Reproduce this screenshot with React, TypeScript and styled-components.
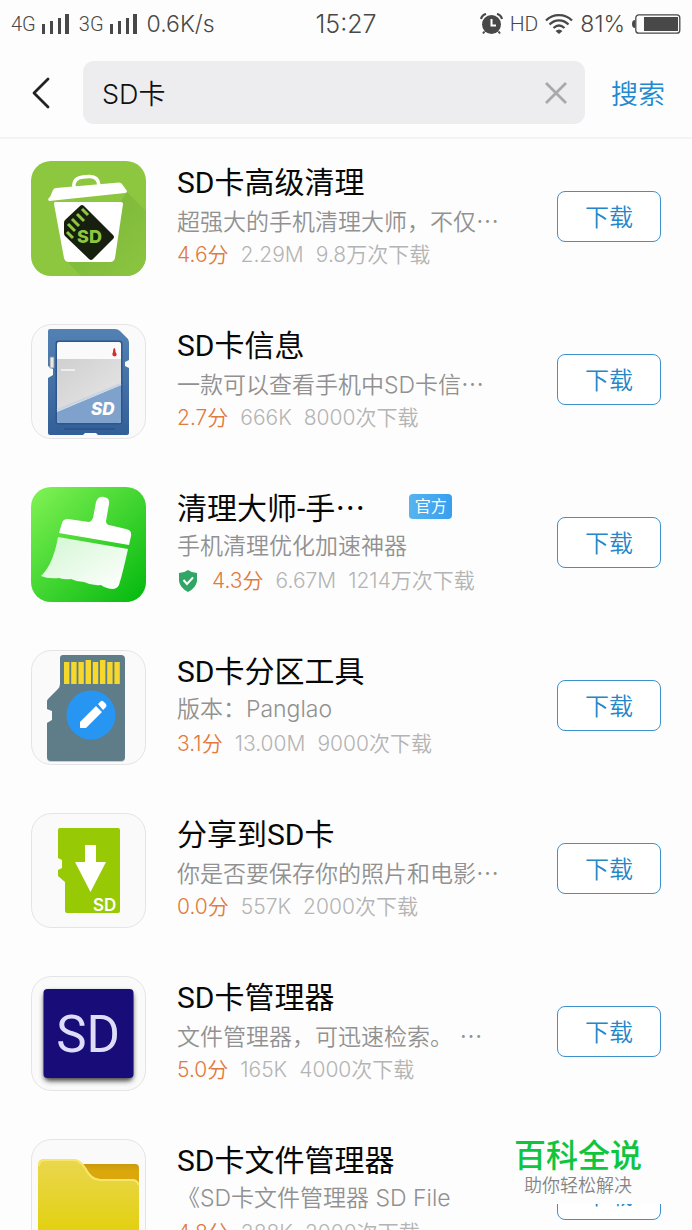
import React from "react";
import styled, { createGlobalStyle } from "styled-components";

const latin = `Inter, "Noto Sans CJK SC", sans-serif`;
const roboto = `Roboto, "Noto Sans CJK SC", sans-serif`;
const cjk = `"Noto Sans CJK SC", sans-serif`;

const GlobalStyle = createGlobalStyle`
  * { box-sizing: border-box; }
  body { margin: 0; background: #fdfdfd; font-family: ${latin}; }
  button, input { font: inherit; }
`;

const Screen = styled.div`
  position: relative;
  display: flex;
  flex-direction: column;
  height: 100vh;
  overflow: hidden;
  background: #fdfdfd;
`;

const StatusBar = styled.header`
  display: grid;
  grid-template-columns: 1fr auto 1fr;
  align-items: center;
  height: 48px;
  padding: 0 11px;
  flex: none;
  color: #484848;
  font-size: 23px;
  font-weight: 300;
  svg { display: block; }
`;

const StatusGroup = styled.div<{ $end?: boolean }>`
  display: flex;
  align-items: center;
  gap: ${(p) => (p.$end ? "7px" : "10px")};
  justify-content: ${(p) => (p.$end ? "flex-end" : "flex-start")};
`;

const Network = styled.span`
  display: flex;
  align-items: center;
  gap: 6px;
  font-family: ${roboto};
  font-size: 20px;
  line-height: 20px;
`;

const Definition = styled.span`
  font-family: ${roboto};
  font-size: 21px;
`;

const Clock = styled.time`
  font-size: 25px;
  font-weight: 350;
`;

const SearchBar = styled.form`
  display: flex;
  align-items: center;
  flex: none;
  height: 91px;
  padding: 0 27px;
  border-bottom: 2px solid #f3f3f3;
`;

const IconButton = styled.button`
  display: flex;
  padding: 0;
  border: 0;
  background: none;
  cursor: pointer;
`;

const SearchField = styled.div`
  display: flex;
  align-items: center;
  flex: 1;
  min-width: 0;
  height: 63px;
  margin: 0 26px 0 28px;
  padding: 0 17px 0 19px;
  border-radius: 11px;
  background: #ededef;
`;

const SearchInput = styled.input`
  flex: 1;
  min-width: 0;
  padding: 0;
  border: 0;
  outline: 0;
  background: none;
  color: #111;
  font-size: 27px;
  font-weight: 350;
`;

const SearchButton = styled.button`
  padding: 0;
  border: 0;
  background: none;
  color: #2189d0;
  font-size: 27px;
  font-weight: 350;
  cursor: pointer;
`;

const List = styled.ul`
  flex: 1;
  min-height: 0;
  margin: 0;
  padding: 22px 31px 0;
  overflow: hidden;
  list-style: none;
`;

const Row = styled.li`
  display: flex;
  height: 115px;
  margin-bottom: 48px;
`;

const AppIcon = styled.svg`
  flex: none;
  width: 115px;
  height: 115px;
  margin-right: 31px;
`;

const Info = styled.div`
  flex: 1;
  min-width: 0;
  height: 115px;
  white-space: nowrap;
`;

const Title = styled.h2`
  display: flex;
  align-items: center;
  height: 38px;
  margin: 0;
  color: #080808;
  font-family: ${roboto};
  font-size: 30px;
  font-weight: 400;
`;

const Description = styled.p`
  height: 42px;
  margin: 0;
  color: #919191;
  font-size: 23px;
  font-weight: 350;
  line-height: 42px;
`;

const Meta = styled.p`
  display: flex;
  align-items: baseline;
  gap: 12px;
  height: 28px;
  margin: 0;
  color: #b4b4b4;
  font-size: 21px;
  font-weight: 350;
  line-height: 28px;
  svg { align-self: center; }
`;

const Score = styled.span`
  color: #e07b3e;
`;

const Dots = styled.span`
  font-family: ${cjk};
`;

const Badge = styled.span`
  margin-left: 44px;
  width: 43px;
  height: 25px;
  border-radius: 4px;
  background: linear-gradient(90deg, #56b4ee, #379ff0);
  color: #fff;
  font-size: 16px;
  line-height: 25px;
  text-align: center;
`;

const Download = styled.button`
  flex: none;
  width: 104px;
  height: 51px;
  margin-top: 30px;
  padding: 0 0 2px;
  border: 1px solid #3d92cc;
  border-radius: 8px;
  background: #fff;
  color: #2387c9;
  font-size: 24px;
  font-weight: 350;
  cursor: pointer;
`;

const Watermark = styled.aside`
  position: absolute;
  right: 24px;
  bottom: 26px;
  width: 162px;
  height: 98px;
  padding: 30px 8px 0;
  background: #fdfdfd;
`;

const Brand = styled.div`
  color: #0fc53d;
  font-size: 32px;
  font-weight: 500;
  line-height: 40px;
  white-space: nowrap;
`;

const Slogan = styled.div`
  padding-left: 10px;
  color: #858585;
  font-size: 18px;
  font-weight: 350;
  line-height: 20px;
  white-space: nowrap;
`;

const Signal = () => (
  <svg width="27" height="20" viewBox="0 0 27 20" fill="#484848">
    <rect x="0" y="10" width="3" height="10" />
    <rect x="8" y="7" width="3" height="13" />
    <rect x="16" y="4" width="3" height="16" />
    <rect x="23" y="0" width="4" height="20" />
  </svg>
);

const AlarmIcon = () => (
  <svg width="23" height="22" viewBox="0 0 23 22" fill="none">
    <circle cx="11.5" cy="11.5" r="9.5" fill="#484848" />
    <path d="M1 6Q2 2 6 1M17 1Q21 2 22 6" stroke="#484848" strokeWidth="2.2" />
    <path d="M11.5 6V12.5H16" stroke="#fff" strokeWidth="2" />
    <path d="M4.5 18.5L3 20.5M18.5 18.5L20 20.5" stroke="#484848" strokeWidth="2" />
  </svg>
);

const WifiIcon = () => (
  <svg width="28" height="20" viewBox="0 0 28 20" fill="none" stroke="#484848" strokeWidth="2.3">
    <path d="M1 6.5C8-.6 20-.6 27 6.5M4.500 10.500C10 5 18 5 23.500 10.500M8.500 14C12 10.800 16 10.800 19.500 14" />
    <path d="M10.500 17Q14 14 17.500 17L14 20Z" fill="#484848" stroke="none" />
  </svg>
);

const BatteryIcon = () => (
  <svg width="49" height="20" viewBox="0 0 49 20">
    <path d="M3 6Q0 6 0 10T3 14Z" fill="#484848" />
    <rect x="3.800" y=".8" width="44" height="18.400" rx="3" fill="none" stroke="#484848" strokeWidth="1.300" />
    <rect x="12" y="3" width="34" height="14" fill="#484848" />
  </svg>
);

const ShieldIcon = () => (
  <svg width="23" height="22" viewBox="0 0 23 22">
    <path d="M11 0Q15 3 20 3V11Q19 18 11 22Q3 18 2 11V3Q7 3 11 0Z" fill="#30a565" />
    <path d="M6.500 10L10 14L16 7.500" fill="none" stroke="#fff" strokeWidth="2" />
  </svg>
);

const Plate = () => (
  <rect x=".5" y=".5" width="114" height="114" rx="20" fill="#fafafa" stroke="#e4e4e4" />
);

const TrashIcon = () => (
  <AppIcon viewBox="0 0 115 115">
    <defs>
      <clipPath id="trashClip"><rect width="115" height="115" rx="20" /></clipPath>
      <linearGradient id="trashShade" x1="0" y1="0" x2="1" y2="1">
        <stop offset=".3" stopColor="#7fb93b" />
        <stop offset="1" stopColor="#8cc540" />
      </linearGradient>
    </defs>
    <g clipPath="url(#trashClip)">
      <rect width="115" height="115" fill="#8dc63f" />
      <path d="M96 31L115 50V115H50L35 99L90 40Z" fill="url(#trashShade)" />
    </g>
    <path d="M43 26Q42 17 52 16L58 15.500Q67 15 68 24" fill="none" stroke="#fff" strokeWidth="3.500" />
    <path d="M25 27L88 21.500Q90 21.500 91 23L96 30Q96 32 94 32L18 40Q16 38 19 36L22 29Q23 27 25 27Z" fill="#fff" />
    <path d="M24 41H90Q92 41 92 43L84 97Q83 101 79 101H38Q34 101 33 97L23 43Q23 41 24 41Z" fill="#fff" />
    <path d="M49 45Q51 43 53 45L82 74Q84 76 82 78L62 98Q60 100 58 98L34 75Q33 74 33 72V62Q33 60 34 59Z" fill="#17200f" />
    <path d="M51 48L57 54M46 53L53 60M41 58L48 65M37 63L44 70M36 71L42 77" stroke="#8dc63f" strokeWidth="3" />
    <text x="46" y="82" fontFamily="Inter" fontSize="18" fontWeight="800" fill="#8dc63f">SD</text>
  </AppIcon>
);

const CardInfoIcon = () => (
  <AppIcon viewBox="0 0 115 115">
    <defs>
      <linearGradient id="cardBlue" x2="0" y2="1">
        <stop stopColor="#5481b3" />
        <stop offset="1" stopColor="#335f98" />
      </linearGradient>
      <linearGradient id="cardGray" x2="1" y2="1">
        <stop stopColor="#cfcfcf" />
        <stop offset="1" stopColor="#e8e8e8" />
      </linearGradient>
    </defs>
    <Plate />
    <path d="M19 5H84Q87 5 89 7L97 15Q98 17 98 19V36L94 38V42L98 44V109Q98 111 96 111H67L65 109H54L52 111H19Q17 111 17 109V54L22 51V45L17 42V7Q17 5 19 5Z" fill="url(#cardBlue)" />
    <path d="M19 33H23V44H19Z" fill="#e8e8e8" stroke="#8b8b8b" strokeWidth=".8" />
    <rect x="24.500" y="16.500" width="67" height="84" rx="3" fill="#2b568e" />
    <rect x="26" y="18" width="64" height="81" rx="2" fill="#fafafa" />
    <path d="M26 35H90V60L26 88Z" fill="url(#cardGray)" />
    <path d="M26 88L90 61V97Q90 99 88 99H28Q26 99 26 97Z" fill="#7fa2cd" />
    <path d="M26 86L90 60" stroke="#c9d4e0" strokeWidth="2" />
    <path d="M83 24Q84.500 24 84.500 28Q87 31 84 32.500Q80 32 82 28Q82 25 83 24Z" fill="#d02f2f" />
    <path d="M30 46H44" stroke="#eee" strokeWidth="2" />
    <path d="M33 105H84" stroke="#2b568e" strokeWidth="2" />
    <text x="60" y="91" fontFamily="Inter" fontSize="17" fontWeight="800" fontStyle="italic" fill="#fff">SD</text>
  </AppIcon>
);

const BroomIcon = () => (
  <AppIcon viewBox="0 0 115 115">
    <defs>
      <linearGradient id="broomBg" x1="0" y1="0" x2="1" y2="1">
        <stop stopColor="#82f355" />
        <stop offset="1" stopColor="#02b80d" />
      </linearGradient>
      <linearGradient id="broomHair" x1="0" y1="0" x2="1" y2="1">
        <stop stopColor="#d2f6d2" />
        <stop offset="1" stopColor="#fff" />
      </linearGradient>
    </defs>
    <rect width="115" height="115" rx="20" fill="url(#broomBg)" />
    <path d="M28 46L31 36Q32 32 37 32L58 35Q61 34 62 31L65 15Q67 9 73 10Q79 11 78 17L75 34Q75 37 78 38L95 42Q101 43 100 49L98 58Z" fill="#fff" />
    <path d="M27 50L97 62Q92 85 88 98Q86 102 81 102Q74 101 70 98Q61 99 53 95Q46 95 40 92Q34 93 28 91Q17 92 10 89Q22 78 27 50Z" fill="url(#broomHair)" />
  </AppIcon>
);

const PartitionIcon = () => (
  <AppIcon viewBox="0 0 115 115">
    <Plate />
    <path d="M32 6H90Q94 6 94 10V108Q94 112 90 112H20Q16 112 16 108V73L21 70V61L16 59V52Q16 50 18 48L27 39Q29 37 29 34V9Q29 6 32 6Z" fill="#c9d0d3" />
    <path d="M32 5H90Q94 5 94 9V107Q94 111 90 111H20Q16 111 16 107V73L21 70V61L16 59V51Q16 50 18 48L27 39Q29 37 29 34V8Q29 5 32 5Z" fill="#5f7d89" />
    {[0, 1, 2, 3, 4, 5, 6, 7].map((i) => {
      const top = i === 3 || i === 5 ? 10 : 12;
      return <rect key={i} x={33 + i * 7.2} y={top} width="5.400" height={34 - top} fill="#f6d72b" />;
    })}
    <circle cx="60" cy="65" r="24.500" fill="#2796f3" />
    <path d="M49 72L65 56L71 62L55 78H49ZM67 54L70 51Q71 50 73 52L75 54Q76 56 75 57L72 60Z" fill="#fff" />
  </AppIcon>
);

const ShareIcon = () => (
  <AppIcon viewBox="0 0 115 115">
    <Plate />
    <path d="M29 15H87Q89 15 89 17V98Q89 100 87 100H36Q34 100 34 98V69L27 63V57L31 55V47L27 45V17Q27 15 29 15Z" fill="#97c904" />
    <path d="M54 32H65V49H75L59.500 79L44 49H54Z" fill="#fff" />
    <text x="62" y="98" fontFamily="Inter" fontSize="17" fontWeight="600" fill="#fff">SD</text>
  </AppIcon>
);

const ManagerIcon = () => (
  <AppIcon viewBox="0 0 115 115">
    <defs>
      <filter id="tileShadow" x="-20%" y="-20%" width="140%" height="140%">
        <feGaussianBlur stdDeviation="2.500" />
      </filter>
    </defs>
    <Plate />
    <rect x="13" y="16" width="89" height="89" rx="5" fill="#444" filter="url(#tileShadow)" />
    <rect x="12.500" y="13" width="90" height="89" rx="4" fill="#180d78" />
    <text x="57" y="76" fontFamily="Roboto" fontSize="51" textAnchor="middle" fill="#dedcf8">SD</text>
  </AppIcon>
);

const FolderIcon = () => (
  <AppIcon viewBox="0 0 115 115">
    <defs>
      <linearGradient id="folderFront" x2="0" y2="1">
        <stop stopColor="#ead74e" />
        <stop offset=".8" stopColor="#e2d00e" />
      </linearGradient>
      <linearGradient id="folderBack" x2="0" y2="1">
        <stop stopColor="#c99a10" />
        <stop offset=".2" stopColor="#dba70a" />
      </linearGradient>
    </defs>
    <Plate />
    <path d="M45 25H104Q108 25 108 29V60H45Z" fill="url(#folderBack)" />
    <path d="M7 115V26Q7 20 13 20H42Q49 20 55 29Q61 40 69 40H102Q108 41 108 46V115Z" fill="url(#folderFront)" />
    <path d="M8 27Q8 21 14 21H42Q49 21 54 29Q60 41 69 41H102Q107 42 107.500 46" fill="none" stroke="#f8e56c" strokeWidth="2" />
  </AppIcon>
);

type Item = {
  icon: React.ComponentType;
  title: string;
  titleCut?: boolean;
  official?: boolean;
  text: string;
  textCut?: boolean;
  score: string;
  size: string;
  count: string;
};

const items: Item[] = [
  { icon: TrashIcon, title: "SD卡高级清理", text: "超强大的手机清理大师，不仅", textCut: true, score: "4.6分", size: "2.29M", count: "9.8万次下载" },
  { icon: CardInfoIcon, title: "SD卡信息", text: "一款可以查看手机中SD卡信", textCut: true, score: "2.7分", size: "666K", count: "8000次下载" },
  { icon: BroomIcon, title: "清理大师-手", titleCut: true, official: true, text: "手机清理优化加速神器", score: "4.3分", size: "6.67M", count: "1214万次下载" },
  { icon: PartitionIcon, title: "SD卡分区工具", text: "版本：Panglao", score: "3.1分", size: "13.00M", count: "9000次下载" },
  { icon: ShareIcon, title: "分享到SD卡", text: "你是否要保存你的照片和电影", textCut: true, score: "0.0分", size: "557K", count: "2000次下载" },
  { icon: ManagerIcon, title: "SD卡管理器", text: "文件管理器，可迅速检索。 ", textCut: true, score: "5.0分", size: "165K", count: "4000次下载" },
  { icon: FolderIcon, title: "SD卡文件管理器", text: "《SD卡文件管理器 SD File", score: "4.8分", size: "288K", count: "2000次下载" },
];

export default function App() {
  return (
    <Screen lang="zh-CN">
      <GlobalStyle />
      <StatusBar>
        <StatusGroup>
          <Network>4G<Signal /></Network>
          <Network>3G<Signal /></Network>
          <span>0.6K/s</span>
        </StatusGroup>
        <Clock>15:27</Clock>
        <StatusGroup $end>
          <AlarmIcon />
          <Definition>HD</Definition>
          <WifiIcon />
          <span>81%</span>
          <BatteryIcon />
        </StatusGroup>
      </StatusBar>
      <SearchBar onSubmit={(e) => e.preventDefault()}>
        <IconButton type="button" aria-label="返回">
          <svg width="28" height="34" viewBox="0 0 28 34" fill="none" stroke="#222" strokeWidth="2.800" strokeLinecap="round" strokeLinejoin="round">
            <path d="M21 3L7 17L21 31" />
          </svg>
        </IconButton>
        <SearchField>
          <SearchInput type="text" aria-label="搜索应用" defaultValue="SD卡" />
          <IconButton type="button" aria-label="清除">
            <svg width="24" height="24" viewBox="0 0 24 24" fill="none" stroke="#a9a9ab" strokeWidth="2.800">
              <path d="M2 2L22 22M22 2L2 22" />
            </svg>
          </IconButton>
        </SearchField>
        <SearchButton type="submit">搜索</SearchButton>
      </SearchBar>
      <List>
        {items.map((item) => {
          const Icon = item.icon;
          return (
            <Row key={item.title}>
              <Icon />
              <Info>
                <Title>
                  {item.title}
                  {item.titleCut && <Dots>…</Dots>}
                  {item.official && <Badge>官方</Badge>}
                </Title>
                <Description>
                  {item.text}
                  {item.textCut && <Dots>…</Dots>}
                </Description>
                <Meta>
                  {item.official && <ShieldIcon />}
                  <Score>{item.score}</Score>
                  <span>{item.size}</span>
                  <span>{item.count}</span>
                </Meta>
              </Info>
              <Download type="button">下载</Download>
            </Row>
          );
        })}
      </List>
      <Watermark>
        <Brand>百科全说</Brand>
        <Slogan>助你轻松解决</Slogan>
      </Watermark>
    </Screen>
  );
}
